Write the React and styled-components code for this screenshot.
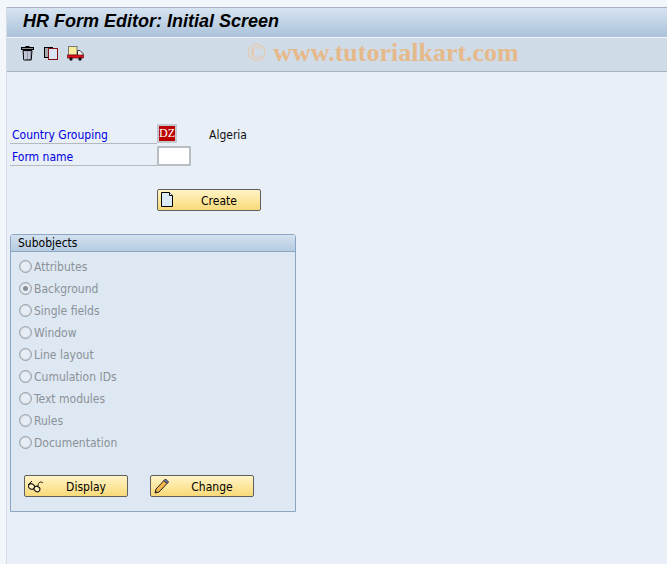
import React from "react";
import styled, { createGlobalStyle } from "styled-components";

const GlobalStyle = createGlobalStyle`
  html, body {
    margin: 0;
    padding: 0;
    background: #f3f6fb;
  }
  body {
    font-family: "DejaVu Sans Condensed", "DejaVu Sans", Tahoma, sans-serif;
    font-size: 12px;
  }
`;

const Page = styled.div`
  width: 667px;
  height: 564px;
  overflow: hidden;
  padding: 7px 0 0 6px;
  box-sizing: border-box;
  background: #f3f6fb;
`;

const Frame = styled.div`
  position: relative;
  height: 557px;
  background: #e8eff7;
  border-left: 1px solid #d5dbe5;
  box-sizing: border-box;
`;

const TitleBar = styled.div`
  height: 31px;
  box-sizing: border-box;
  border-top: 1px solid #a7afc0;
  border-bottom: 1px solid #f0f4f9;
  background: linear-gradient(#d6e3f1, #abc2da);
  padding: 1px 0 0 16px;
`;

const Title = styled.h1`
  margin: 0;
  font-family: "Liberation Sans", Arial, sans-serif;
  font-size: 18px;
  line-height: 24px;
  font-weight: bold;
  font-style: italic;
  color: #000;
`;

const Toolbar = styled.div`
  height: 34px;
  box-sizing: border-box;
  border-bottom: 1px solid #a6b1c3;
  background: #cfdce8;
  display: flex;
  align-items: center;
  gap: 7px;
  padding: 0 0 3px 12px;
`;

const ToolIcon = styled.svg`
  width: 17px;
  height: 16px;
  display: block;
`;

const Watermark = styled.div`
  position: absolute;
  left: 240px;
  top: 32px;
  font-family: "Liberation Serif", serif;
  font-size: 26px;
  line-height: 28px;
  font-weight: bold;
  color: #e6b98a;
  white-space: nowrap;
`;

const Copyright = styled.span`
  font-weight: normal;
  color: #ecc8a4;
`;

const Content = styled.div`
  padding: 52px 0 0 3px;
`;

const Row = styled.div`
  display: flex;
  height: 22px;
`;

const Label = styled.div`
  width: 147px;
  height: 20px;
  box-sizing: border-box;
  padding: 1px 0 0 2px;
  line-height: 21px;
  color: #0000e0;
  border-bottom: 1px solid #b5bac2;
`;

const CodeBox = styled.div`
  width: 20px;
  height: 19px;
  box-sizing: border-box;
  border: 2px solid #c3c8cf;
  background: #bc0000;
  color: #fff;
  font-family: "Liberation Serif", serif;
  font-size: 12px;
  line-height: 15px;
  text-align: center;
`;

const CodeText = styled.div`
  margin-left: 32px;
  padding-top: 1px;
  line-height: 21px;
  color: #111;
`;

const TextInput = styled.div`
  width: 34px;
  height: 20px;
  box-sizing: border-box;
  border: 2px solid #b9bec5;
  border-radius: 1px;
  background: #fff;
`;

const CreateRow = styled.div`
  margin: 21px 0 0 147px;
`;

const Button = styled.button`
  width: 104px;
  height: 22px;
  box-sizing: border-box;
  display: flex;
  align-items: center;
  padding: 0 0 0 2px;
  border: 1px solid #5f5f5f;
  border-radius: 2px;
  background: linear-gradient(#fff4c8, #fde69b 55%, #f8d97a);
  font: inherit;
  color: #000;
`;

const ButtonIcon = styled.svg`
  width: 18px;
  height: 18px;
  display: block;
  flex: none;
`;

const ButtonText = styled.span`
  flex: 1;
  text-align: center;
  padding-top: 2px;
`;

const Panel = styled.section`
  margin: 23px 0 0 0;
  width: 286px;
  height: 278px;
  box-sizing: border-box;
  border: 1px solid #8ba6c2;
  border-radius: 3px 3px 0 0;
  background: #dde8f2;
`;

const PanelHeader = styled.div`
  height: 17px;
  box-sizing: border-box;
  padding-left: 7px;
  line-height: 17px;
  color: #000;
  background: linear-gradient(#d3e1ef, #b5cce2);
  border-bottom: 1px solid #8ba6c2;
`;

const RadioList = styled.div`
  padding: 3px 0 0 8px;
`;

const RadioRow = styled.div`
  display: flex;
  align-items: center;
  height: 22px;
  color: #8c9198;
`;

const RadioLabel = styled.span`
  padding-top: 2px;
`;

const RadioCircle = styled.span`
  width: 13px;
  height: 13px;
  box-sizing: border-box;
  border: 1px solid #9a9ea4;
  box-shadow: inset 0 0 0 1px #cfd6de;
  border-radius: 50%;
  background: #e6edf4;
  display: flex;
  align-items: center;
  justify-content: center;
  margin-right: 2px;

  &::after {
    content: "";
    width: 5px;
    height: 5px;
    border-radius: 50%;
    background: ${(p) => (p.$checked ? "#8a8f96" : "transparent")};
  }
`;

const PanelButtons = styled.div`
  display: flex;
  gap: 22px;
  margin: 22px 0 0 13px;
`;

const subobjects = [
  "Attributes",
  "Background",
  "Single fields",
  "Window",
  "Line layout",
  "Cumulation IDs",
  "Text modules",
  "Rules",
  "Documentation",
];

const TrashIcon = () => (
  <ToolIcon viewBox="0 0 17 16">
    <path d="M6.5 1.5h4" stroke="#000" />
    <rect x="2.5" y="2.5" width="12" height="2" fill="#8c8c8c" stroke="#000" />
    <path d="M4 5.5h9l-.8 9.5H4.8z" fill="#9a9eb2" stroke="#000" />
    <path d="M7 6.5v7.5M10 6.5v7.5" stroke="#e4e6f2" />
    <path d="M5.5 6v8.5" stroke="#c6c9d8" />
  </ToolIcon>
);

const CopyIcon = () => (
  <ToolIcon viewBox="0 0 17 16">
    <rect x="1.5" y="2.5" width="8" height="10" fill="#a8a8a8" stroke="#000" />
    <rect x="5.5" y="3.5" width="9" height="11" fill="#d8e6f6" stroke="#8a0a14" />
  </ToolIcon>
);

const TruckIcon = () => (
  <ToolIcon viewBox="0 0 17 16">
    <rect x="1.5" y="1.5" width="8.5" height="8.5" fill="#fbeb9f" stroke="#777" />
    <path d="M10.5 5.5h2.5l3 3v2h-5.5z" fill="#f2f2f2" stroke="#333" />
    <rect x="0.5" y="10" width="16" height="3" fill="#e0101c" stroke="#600" strokeWidth="0.6" />
    <circle cx="4" cy="14" r="1.7" fill="#111" />
    <circle cx="13" cy="14" r="1.7" fill="#111" />
  </ToolIcon>
);

const PageIcon = () => (
  <ButtonIcon viewBox="0 0 18 18">
    <path d="M1.5 1.5h8l3 3v11h-11z" fill="#dceaf8" stroke="#000" />
    <path d="M9.5 1.5v3h3" fill="#fff" stroke="#000" />
  </ButtonIcon>
);

const GlassesIcon = () => (
  <ButtonIcon viewBox="0 0 18 18">
    <path d="M1 8l4-4M11 9c0-4 3-5 5-3" fill="none" stroke="#111" />
    <ellipse cx="4.5" cy="9.5" rx="3" ry="2.6" transform="rotate(30 4.5 9.5)" fill="#fff3c0" stroke="#111" />
    <ellipse cx="10" cy="12" rx="3" ry="2.6" transform="rotate(30 10 12)" fill="#fff3c0" stroke="#111" />
  </ButtonIcon>
);

const PencilIcon = () => (
  <ButtonIcon viewBox="0 0 18 18">
    <path d="M2 16l1-4L11 3.5l3 3L6 15z" fill="#f4b64a" stroke="#222" />
    <path d="M11 3.5l1.5-1.5 3 3-1.5 1.5z" fill="#7a86c8" stroke="#222" />
    <path d="M2 16l.6-2.4 1.8 1.8z" fill="#222" />
  </ButtonIcon>
);

const App = () => (
  <Page>
    <GlobalStyle />
    <Frame>
      <TitleBar>
        <Title>HR Form Editor: Initial Screen</Title>
      </TitleBar>
      <Toolbar>
        <TrashIcon />
        <CopyIcon />
        <TruckIcon />
      </Toolbar>
      <Watermark>
        <Copyright>©</Copyright> www.tutorialkart.com
      </Watermark>
      <Content>
        <Row>
          <Label>Country Grouping</Label>
          <CodeBox>DZ</CodeBox>
          <CodeText>Algeria</CodeText>
        </Row>
        <Row>
          <Label>Form name</Label>
          <TextInput />
        </Row>
        <CreateRow>
          <Button>
            <PageIcon />
            <ButtonText>Create</ButtonText>
          </Button>
        </CreateRow>
        <Panel>
          <PanelHeader>Subobjects</PanelHeader>
          <RadioList>
            {subobjects.map((name) => (
              <RadioRow key={name}>
                <RadioCircle $checked={name === "Background"} />
                <RadioLabel>{name}</RadioLabel>
              </RadioRow>
            ))}
          </RadioList>
          <PanelButtons>
            <Button>
              <GlassesIcon />
              <ButtonText>Display</ButtonText>
            </Button>
            <Button>
              <PencilIcon />
              <ButtonText>Change</ButtonText>
            </Button>
          </PanelButtons>
        </Panel>
      </Content>
    </Frame>
  </Page>
);

export default App;
